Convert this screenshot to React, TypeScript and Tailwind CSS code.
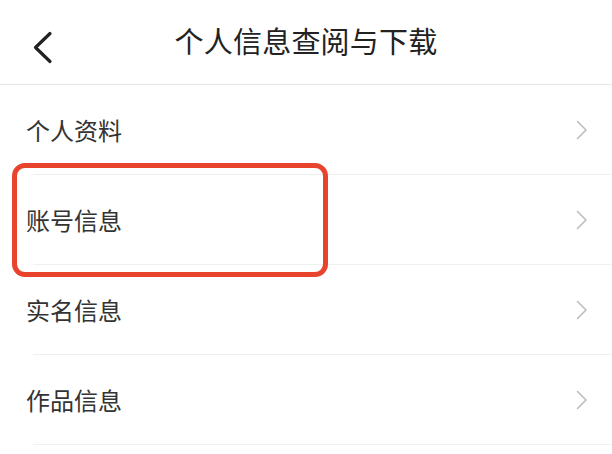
import React from 'react'

const items = ['个人资料', '账号信息', '实名信息', '作品信息']

function ChevronRight() {
  return (
    <svg width="12" height="20" viewBox="0 0 12 20" fill="none">
      <path d="M1.5 1.5 L10 10 L1.5 18.5" stroke="#bdbdbd" strokeWidth="1.6" strokeLinecap="round" strokeLinejoin="round" />
    </svg>
  )
}

export default function App() {
  return (
    <div
      className="w-[612px] h-[454px] bg-white overflow-hidden text-[#333]"
      style={{ fontFamily: '"Noto Sans CJK SC", "Noto Sans", sans-serif' }}
    >
      <header className="relative h-[85px] flex items-center justify-center border-b border-[#e6e6e6]">
        <button className="absolute left-[31px] top-[31px]">
          <svg width="24" height="33" viewBox="0 0 24 33" fill="none">
            <path d="M19 2.5 L4.5 16.5 L19 30.5" stroke="#222" strokeWidth="3.2" strokeLinecap="round" strokeLinejoin="round" />
          </svg>
        </button>
        <h1 className="text-[29px] leading-none text-[#222] tracking-[0.2px] -mt-[4px]">个人信息查阅与下载</h1>
      </header>

      <ul className="relative">
        {items.map(label => (
          <li key={label} className="ml-[33px] h-[90px] border-b border-[#f0f0f0] flex items-center justify-between pr-[24px]">
            <span className="-ml-[7px] text-[24px] leading-none">{label}</span>
            <ChevronRight />
          </li>
        ))}
        <div className="absolute left-[12px] top-[78px] w-[316px] h-[114px] border-[5px] border-[#e8432d] rounded-[13px] pointer-events-none" />
      </ul>
    </div>
  )
}
